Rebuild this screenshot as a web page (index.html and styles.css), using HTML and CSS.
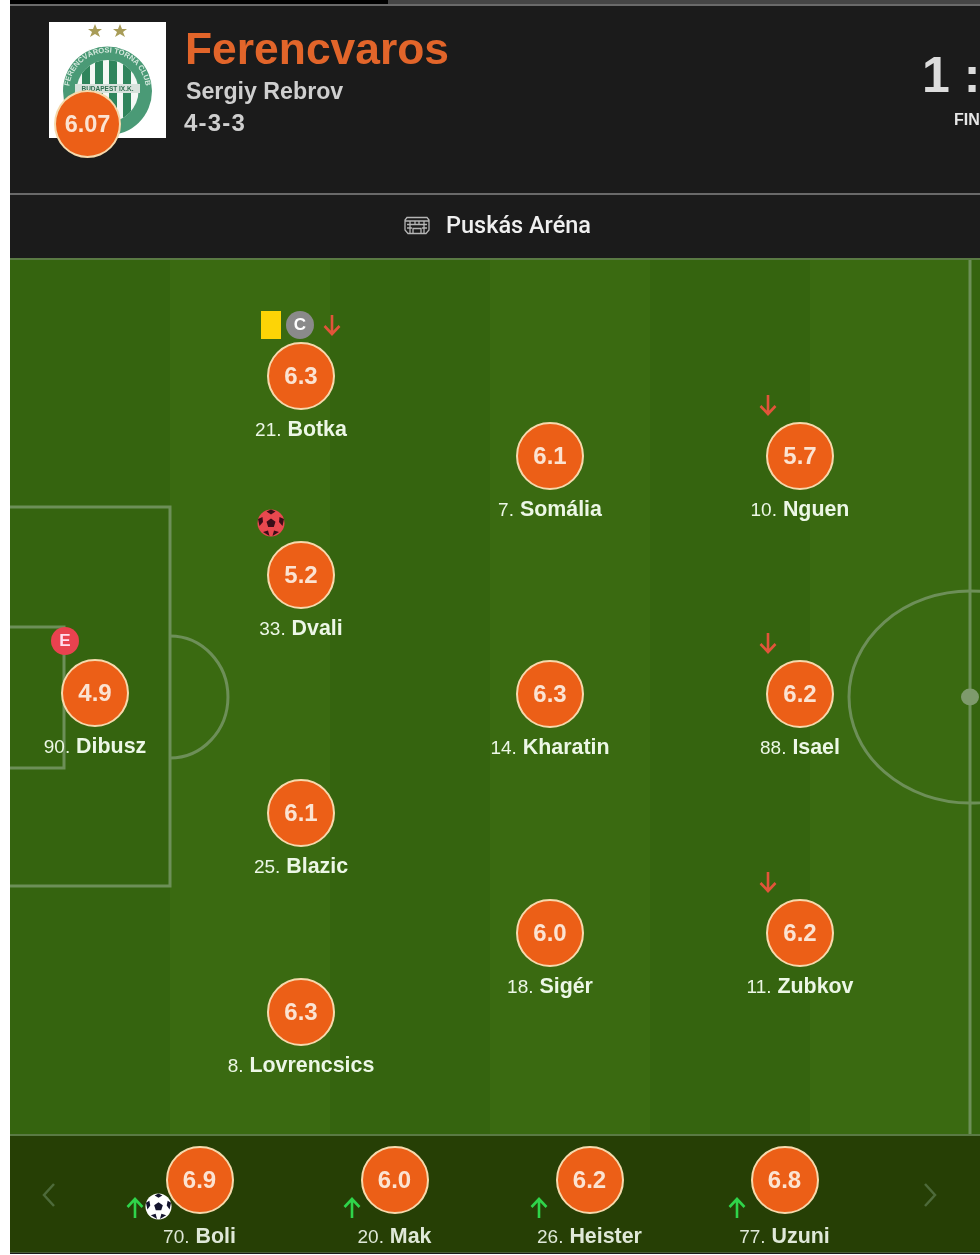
FILE: index.html
```html
<!DOCTYPE html>
<html lang="en">
<head>
<meta charset="utf-8">
<title>Ferencvaros lineup</title>
<link rel="stylesheet" href="styles.css">
</head>
<body>
<div class="page">
  <div class="progress"><div class="progress-fill"></div></div>
  <header class="match-head">
    <div class="team">
      <div class="crest">
        <svg class="crest-art" viewBox="0 0 117 116" aria-hidden="true">
          <defs>
            <path id="crest-ring" d="M20 69A38.500 38.500 0 0 1 97 69"/>
            <clipPath id="crest-inner"><circle cx="58.500" cy="69" r="31"/></clipPath>
          </defs>
          <rect width="117" height="116" fill="#fff"/>
          <polygon fill="#a89c58" points="46,2 48,7 53,7 49,10 51,15 46,12 41,15 43,10 39,7 44,7"/>
          <polygon fill="#a89c58" points="71,2 73,7 78,7 74,10 76,15 71,12 66,15 68,10 64,7 69,7"/>
          <circle cx="58.500" cy="69" r="44.500" fill="#4a9a76"/>
          <circle cx="58.500" cy="69" r="31" fill="#f4f8f5"/>
          <g clip-path="url(#crest-inner)">
            <rect x="33" y="36" width="8" height="66" fill="#2f855c"/>
            <rect x="46" y="36" width="8" height="66" fill="#2f855c"/>
            <rect x="60" y="36" width="8" height="66" fill="#2f855c"/>
            <rect x="74" y="36" width="8" height="66" fill="#2f855c"/>
          </g>
          <rect x="26" y="62" width="65" height="9" fill="#d8e2dc"/>
          <text class="crest-ring-text"><textPath href="#crest-ring" startOffset="50%" text-anchor="middle">FERENCVÁROSI TORNA CLUB</textPath></text>
          <text class="crest-band-text" x="58.500" y="69" text-anchor="middle">BUDAPEST IX.K.</text>
        </svg>
        <span class="team-rating">6.07</span>
      </div>
      <div class="team-info">
        <h1 class="team-name">Ferencvaros</h1>
        <p class="coach">Sergiy Rebrov</p>
        <p class="formation">4-3-3</p>
      </div>
    </div>
    <div class="score">
      <div class="score-value">1 : 0</div>
      <div class="score-status">FINAL</div>
    </div>
  </header>
  <div class="venue">
    <svg class="venue-icon" viewBox="0 0 26 20" aria-hidden="true">
      <path fill="none" stroke="#b5b5b5" stroke-width="1.300" d="M3 2.500H23L25 5V15L22 18.500H4L1 15V5ZM1 6H25M3 9.500H23M6 6V18M11 6V9.500M15 6V9.500M20 6V18M9 18V13.500H17V18M3 13H8M18 13H23"/>
    </svg>
    <span class="venue-name">Puskás Aréna</span>
  </div>
  <main class="pitch">
    <svg class="pitch-lines" viewBox="0 0 970 876" aria-hidden="true">
      <g fill="none" stroke="#6d8f58" stroke-width="3">
        <path d="M0 247H160V626H0"/>
        <path d="M0 367H54V508H0"/>
        <path d="M160 376A58 61 0 0 1 160 498"/>
        <path d="M960 0V876"/>
        <ellipse cx="960" cy="437" rx="121" ry="106"/>
      </g>
      <ellipse cx="960" cy="437" rx="9" ry="8.500" fill="#7e9a6c"/>
    </svg>

    <div class="player pos-dibusz">
      <span class="badge-e">E</span>
      <span class="rating">4.9</span>
      <span class="label"><span class="num">90.</span> Dibusz</span>
    </div>

    <div class="player pos-botka">
      <span class="marks marks-botka">
        <span class="yellow-card"></span>
        <span class="captain">C</span>
        <svg class="arrow arrow-down" viewBox="0 0 20 24" aria-hidden="true"><path d="M10 2V21M2.500 13L10 21L17.500 13"/></svg>
      </span>
      <span class="rating">6.3</span>
      <span class="label"><span class="num">21.</span> Botka</span>
    </div>

    <div class="player pos-dvali">
      <svg class="goal-ball" viewBox="0 0 28 28" aria-hidden="true">
        <circle cx="14" cy="14" r="13.500" fill="#e9484f"/>
        <path fill="#3a0d18" d="M14 9.500L18.500 12.800L16.800 18H11.200L9.500 12.800ZM14 .5L18.500 2.500L14 5.500L9.500 2.500ZM1 10L5.500 8L6 13L2.500 17ZM27 10L22.500 8L22 13L25.500 17ZM6 23L11 21.500L12.500 27ZM22 23L17 21.500L15.500 27Z"/>
      </svg>
      <span class="rating">5.2</span>
      <span class="label"><span class="num">33.</span> Dvali</span>
    </div>

    <div class="player pos-blazic">
      <span class="rating">6.1</span>
      <span class="label"><span class="num">25.</span> Blazic</span>
    </div>

    <div class="player pos-lovrencsics">
      <span class="rating">6.3</span>
      <span class="label"><span class="num">8.</span> Lovrencsics</span>
    </div>

    <div class="player pos-somalia">
      <span class="rating">6.1</span>
      <span class="label"><span class="num">7.</span> Somália</span>
    </div>

    <div class="player pos-kharatin">
      <span class="rating">6.3</span>
      <span class="label"><span class="num">14.</span> Kharatin</span>
    </div>

    <div class="player pos-siger">
      <span class="rating">6.0</span>
      <span class="label"><span class="num">18.</span> Sigér</span>
    </div>

    <div class="player pos-nguen">
      <svg class="arrow arrow-down sub-out" viewBox="0 0 20 24" aria-hidden="true"><path d="M10 2V21M2.500 13L10 21L17.500 13"/></svg>
      <span class="rating">5.7</span>
      <span class="label"><span class="num">10.</span> Nguen</span>
    </div>

    <div class="player pos-isael">
      <svg class="arrow arrow-down sub-out" viewBox="0 0 20 24" aria-hidden="true"><path d="M10 2V21M2.500 13L10 21L17.500 13"/></svg>
      <span class="rating">6.2</span>
      <span class="label"><span class="num">88.</span> Isael</span>
    </div>

    <div class="player pos-zubkov">
      <svg class="arrow arrow-down sub-out" viewBox="0 0 20 24" aria-hidden="true"><path d="M10 2V21M2.500 13L10 21L17.500 13"/></svg>
      <span class="rating">6.2</span>
      <span class="label"><span class="num">11.</span> Zubkov</span>
    </div>
  </main>
  <section class="bench">
    <svg class="chevron chevron-left" viewBox="0 0 16 26" aria-hidden="true"><path d="M13 2L3 13L13 24"/></svg>
    <div class="bench-list">
      <div class="player bench-player">
        <svg class="arrow arrow-up sub-in sub-in-boli" viewBox="0 0 20 24" aria-hidden="true"><path d="M10 22V3M2.500 11L10 3L17.500 11"/></svg>
        <svg class="sub-ball" viewBox="0 0 28 28" aria-hidden="true">
          <circle cx="14" cy="14" r="13.500" fill="#fff"/>
          <path fill="#14142e" d="M14 9.500L18.500 12.800L16.800 18H11.200L9.500 12.800ZM14 .5L18 2.500L14 5L10 2.500ZM1 10L4.500 8L5.500 13L2.500 17ZM27 10L23.500 8L22.500 13L25.500 17ZM6 23L11 21.500L12.500 27ZM22 23L17 21.500L15.500 27Z"/>
        </svg>
        <span class="rating">6.9</span>
        <span class="label"><span class="num">70.</span> Boli</span>
      </div>
      <div class="player bench-player">
        <svg class="arrow arrow-up sub-in sub-in-mak" viewBox="0 0 20 24" aria-hidden="true"><path d="M10 22V3M2.500 11L10 3L17.500 11"/></svg>
        <span class="rating">6.0</span>
        <span class="label"><span class="num">20.</span> Mak</span>
      </div>
      <div class="player bench-player">
        <svg class="arrow arrow-up sub-in sub-in-heister" viewBox="0 0 20 24" aria-hidden="true"><path d="M10 22V3M2.500 11L10 3L17.500 11"/></svg>
        <span class="rating">6.2</span>
        <span class="label"><span class="num">26.</span> Heister</span>
      </div>
      <div class="player bench-player">
        <svg class="arrow arrow-up sub-in sub-in-uzuni" viewBox="0 0 20 24" aria-hidden="true"><path d="M10 22V3M2.500 11L10 3L17.500 11"/></svg>
        <span class="rating">6.8</span>
        <span class="label"><span class="num">77.</span> Uzuni</span>
      </div>
    </div>
    <svg class="chevron chevron-right" viewBox="0 0 16 26" aria-hidden="true"><path d="M3 2L13 13L3 24"/></svg>
  </section>
</div>
</body>
</html>
```
FILE: styles.css
```css
* { box-sizing: border-box; }
html, body { margin: 0; padding: 0; background: #fff; overflow: hidden; height: 1255px; width: 980px; }
body { font-family: "Liberation Sans", Arial, sans-serif; }
.page { margin-left: 10px; width: 970px; height: 1254px; background: #1b1b1b; filter: blur(.45px); }

.progress { height: 4px; background: #454545; }
.progress-fill { width: 378px; height: 100%; background: #000; }

.match-head {
  display: flex;
  height: 191px;
  border-top: 2px solid #6a6a6a;
  border-bottom: 2px solid #6a6a6a;
  background: #1b1b1b;
  white-space: nowrap;
}
.team { display: flex; width: 910px; flex: none; padding: 16px 0 0 39px; }
.crest { position: relative; width: 117px; height: 116px; flex: none; }
.crest-art { display: block; width: 117px; height: 116px; }
.crest-ring-text { font: bold 7.500px "Liberation Sans", sans-serif; fill: #d5e8dd; }
.crest-band-text { font: bold 6.500px "Liberation Sans", sans-serif; fill: #2f6f50; }
.team-rating {
  position: absolute; left: 5px; top: 68px;
  width: 67px; height: 68px; border-radius: 50%;
  display: flex; align-items: center; justify-content: center;
  background: #ec5f17; border: 2px solid #f6d9ac;
  color: #fbe3d2; font: bold 23.500px "Liberation Sans", sans-serif;
}
.team-info { margin-left: 20px; }
.team-name { margin: 2px 0 0 -1px; color: #e2652a; font: bold 44.400px/50px "Liberation Sans", sans-serif; }
.coach { margin: 3px 0 0; color: #cfcfcf; font: bold 23.200px/28px "Liberation Sans", sans-serif; }
.formation { margin: 4px 0 0 -2px; color: #cfcfcf; font: bold 24px/28px "Liberation Sans", sans-serif; letter-spacing: 1.200px; }

.score { flex: none; width: 200px; margin-left: 2px; padding-top: 39px; }
.score-value { color: #dcdcdc; font: bold 50px/60px "Liberation Sans", sans-serif; white-space: pre; }
.score-status { margin-top: 6px; margin-left: 32px; color: #e6e6e6; font: bold 16px/18px "Liberation Sans", sans-serif; }

.venue {
  height: 63px; display: flex; align-items: center; justify-content: center; gap: 16px;
  background: #1b1b1b; padding: 0 0 3px 5px;
}
.venue-icon { width: 26px; height: 20px; display: block; }
.venue-name { color: #efefef; font: 500 23.500px/30px Roboto, sans-serif; }

.pitch {
  position: relative; height: 878px; overflow: hidden;
  border-top: 2px solid #5a7a44;
  border-bottom: 2px solid #5a7a44;
  background: repeating-linear-gradient(90deg, #35640f 0 160px, #3a6a11 160px 320px);
}
.pitch-lines { position: absolute; left: 0; top: 0; width: 970px; height: 876px; }

.player {
  position: absolute; width: 200px; margin-left: -100px;
  display: flex; flex-direction: column; align-items: center;
}
.rating {
  width: 68px; height: 68px; border-radius: 50%; flex: none;
  display: flex; align-items: center; justify-content: center;
  background: #ec5f17; border: 2px solid #f6d9ac;
  color: #fbe3d2; font: bold 24px "Liberation Sans", sans-serif;
}
.label {
  margin-top: 6px; color: #ecf7e6; font: bold 21.400px/26px "Liberation Sans", sans-serif; white-space: nowrap;
}
.num { font-weight: 400; font-size: 19px; }

.pos-dibusz { left: 85px; top: 399px; }
.pos-botka { left: 291px; top: 82px; }
.pos-dvali { left: 291px; top: 281px; }
.pos-blazic { left: 291px; top: 519px; }
.pos-lovrencsics { left: 291px; top: 718px; }
.pos-somalia { left: 540px; top: 162px; }
.pos-kharatin { left: 540px; top: 400px; }
.pos-siger { left: 540px; top: 639px; }
.pos-nguen { left: 790px; top: 162px; }
.pos-isael { left: 790px; top: 400px; }
.pos-zubkov { left: 790px; top: 639px; }

.badge-e {
  position: absolute; left: 56px; top: -32px; width: 28px; height: 28px; border-radius: 50%;
  display: flex; align-items: center; justify-content: center;
  background: #e9424f; color: #fde; font: bold 17px "Liberation Sans", sans-serif;
}
.marks { position: absolute; display: flex; align-items: center; }
.marks-botka { left: 60px; top: -32px; height: 30px; }
.yellow-card { width: 20px; height: 28px; background: #fdd406; margin-right: 5px; }
.captain {
  width: 28px; height: 28px; border-radius: 50%; margin-right: 8px;
  display: flex; align-items: center; justify-content: center;
  background: #8a8a8a; color: #fff; font: bold 17px "Liberation Sans", sans-serif;
}
.arrow { display: block; fill: none; stroke-width: 2.600px; width: 20px; height: 24px; }
.arrow-down { stroke: #e2543a; }
.arrow-up { stroke: #2fd44a; }
.sub-out { position: absolute; left: 58px; top: -29px; }
.goal-ball { position: absolute; left: 56px; top: -32px; width: 28px; height: 28px; display: block; }

.bench {
  position: relative; height: 117px;
  background: #263f05; border-bottom: 1px solid #4a5f38;
}
.bench-list { display: flex; padding: 10px 0 0 0; margin-left: 92px; }
.bench-player { position: relative; margin-left: 0; width: 195px; flex: none; }
.bench-player .label { margin-top: 9px; color: #dfe8d8; }
.sub-in { position: absolute; top: 50px; }
.sub-in-boli { left: 23px; }
.sub-in-mak { left: 45px; }
.sub-in-heister { left: 37px; }
.sub-in-uzuni { left: 40px; }
.sub-ball { position: absolute; left: 43px; top: 47px; width: 27px; height: 27px; display: block; }

.chevron { position: absolute; top: 46px; width: 16px; height: 26px; fill: none; stroke: #4d6a3a; stroke-width: 2.500px; }
.chevron-left { left: 31px; }
.chevron-right { left: 912px; }
```
